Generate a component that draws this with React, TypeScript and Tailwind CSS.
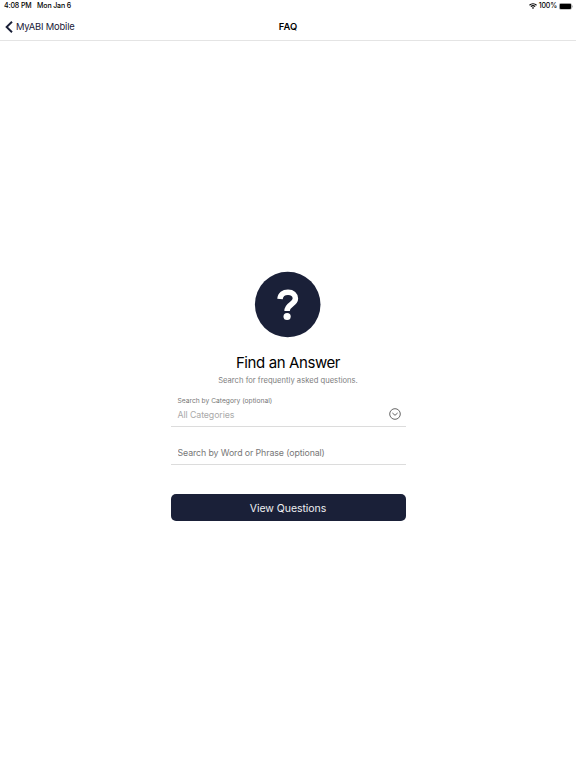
import { useState } from 'react';

function WifiIcon() {
  return (
    <svg className="h-[6px] w-2" viewBox="0 0 16 12" fill="none" stroke="black" strokeWidth="2.4">
      <path d="M1 4.4a10 10 0 0 1 14 0" />
      <path d="M3.8 7.3a6 6 0 0 1 8.4 0" />
      <path d="M8 12 5.6 9.5a3.4 3.4 0 0 1 4.8 0Z" fill="black" stroke="none" />
    </svg>
  );
}

function BatteryIcon() {
  return (
    <svg className="h-[7px] w-[14px]" viewBox="0 0 14 7">
      <rect x="0.25" y="0.25" width="12.3" height="6.3" rx="1.7" fill="none" stroke="#8c8c8c" strokeWidth="0.5" />
      <rect x="0.7" y="0.8" width="11.4" height="5.2" rx="1.1" fill="black" />
      <path d="M13.1 2.3a1.3 1.3 0 0 1 0 2.2Z" fill="#8c8c8c" />
    </svg>
  );
}

function HelpIcon() {
  return (
    <svg className="h-[66px] w-[66px] overflow-visible" viewBox="0 0 66 66" fill="none">
      <circle cx="32.7" cy="32.5" r="32.8" fill="#1a2038" />
      <path
        d="M25 27C25.3 22.6 28.6 20.2 33 20.2C37.6 20.2 40.4 22.8 40.4 26.6C40.4 32.6 32.1 32 32.1 39"
        stroke="white"
        strokeWidth="5.5"
      />
      <circle cx="32.1" cy="44.5" r="3.6" fill="white" />
    </svg>
  );
}

function StatusBar() {
  return (
    <div className="flex h-3 items-center justify-between pr-[3px] pl-1 text-[7px] leading-3 font-medium text-black">
      <div className="flex gap-[6px] tracking-[-0.12px]">
        <span className="w-[27px] whitespace-nowrap">4:08 PM</span>
        <span className="whitespace-nowrap">Mon Jan 6</span>
      </div>
      <div className="flex items-center gap-[2px]">
        <WifiIcon />
        <span className="tracking-[-0.15px]">100%</span>
        <BatteryIcon />
      </div>
    </div>
  );
}

function NavBar() {
  return (
    <header className="grid h-[29px] grid-cols-3 items-center border-b border-[#e4e4e4] pt-[2px]">
      <button className="flex items-center gap-[3px] pl-[5px] text-[9.4px] leading-[14px] tracking-[-0.18px] text-[#1a2038]">
        <svg className="h-3 w-2" viewBox="0 0 8 12" fill="none" stroke="currentColor" strokeWidth="1.9">
          <path d="M7 0.7 1.6 6 7 11.3" />
        </svg>
        MyABI Mobile
      </button>
      <h1 className="text-center text-[9.4px] leading-[14px] font-semibold text-black">FAQ</h1>
    </header>
  );
}

export default function App() {
  const [phrase, setPhrase] = useState('');

  return (
    <div className="h-screen overflow-hidden bg-white font-['Inter',sans-serif]">
      <StatusBar />
      <NavBar />

      <main className="mx-auto mt-[231px] flex w-[235px] flex-col items-center">
        <HelpIcon />
        <h2 className="mt-[15px] text-[15px] leading-5 tracking-[-0.4px] whitespace-nowrap text-black">Find an Answer</h2>
        <p className="mt-[2px] text-[7.6px] leading-3 tracking-[0.02px] whitespace-nowrap text-[#808080]">
          Search for frequently asked questions.
        </p>

        {/* Category */}
        <div className="mt-[9px] flex h-[31px] w-full justify-between border-b border-[#dcdcdc] pr-[5px] pl-[7px]">
          <div>
            <div className="text-[6.7px] leading-[10px] text-[#777]">Search by Category (optional)</div>
            <div className="text-[8.8px] leading-[17px] tracking-[-0.09px] text-[#aaa]">All Categories</div>
          </div>
          <svg className="mt-3 h-3 w-3" viewBox="0 0 12 12" fill="none" stroke="#666" strokeWidth="1">
            <circle cx="6" cy="6" r="5.3" />
            <path d="M3.4 5 6 7.3 8.6 5" />
          </svg>
        </div>

        {/* Phrase */}
        <input
          value={phrase}
          onChange={(e) => setPhrase(e.target.value)}
          placeholder="Search by Word or Phrase (optional)"
          className="mt-[12px] h-[26px] w-full border-b border-[#dcdcdc] px-[7px] pt-px text-[8.8px] tracking-[-0.1px] outline-none placeholder:text-[#777]"
        />

        <button className="mt-[29px] h-[27px] w-full rounded-[5px] bg-[#1a2038] pt-[2px] text-[10.5px] tracking-[-0.05px] text-[#eeeff2]">
          View Questions
        </button>
      </main>
    </div>
  );
}
